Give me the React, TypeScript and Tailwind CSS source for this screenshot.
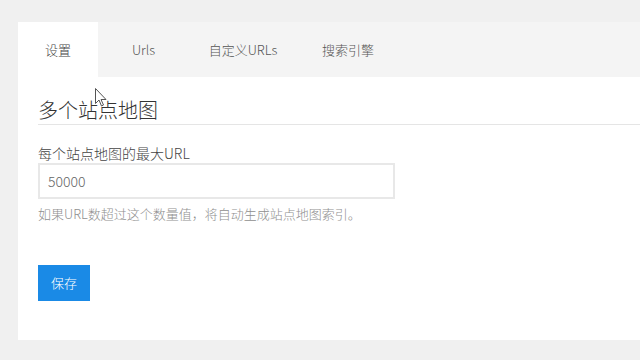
import React from "react";

const font = { fontFamily: '"Noto Sans CJK SC", "Noto Sans", sans-serif' };

export default function App() {
  const tabs = [
    { label: "设置", w: "w-[80px]", active: true },
    { label: "Urls", w: "w-[91px]" },
    { label: "自定义URLs", w: "w-[108px]" },
    { label: "搜索引擎", w: "w-[102px]" },
  ];
  return (
    <div className="w-[640px] h-[360px] bg-[#f0f0f0] pt-[22px] pl-[18px] overflow-hidden relative font-light" style={font}>
      <div className="bg-white w-[640px] h-[318px]">
        <div className="flex h-[55px] bg-[#f4f4f4]">
          {tabs.map((t) => (
            <div
              key={t.label}
              className={`${t.w} h-full flex items-center justify-center text-[13px] ${
                t.active ? "bg-white text-[#444]" : "text-[#555]"
              }`}
            >
              {t.label}
            </div>
          ))}
        </div>
        <div className="pl-[20px]">
          <div className="mt-[19px] h-[29px] leading-[28px] text-[20px] text-[#333] border-b border-[#e5e5e5]">
            多个站点地图
          </div>
          <div className="mt-[18px] text-[14px] leading-[20px] text-[#444]">每个站点地图的最大URL</div>
          <div className="w-[357px] h-[36px] border-2 border-[#e8e8e8] flex items-center pl-[8px] text-[14px] text-[#666]">
            50000
          </div>
          <div className="mt-[5px] text-[13px] leading-[20px] text-[#8f8f8f]">
            如果URL数超过这个数量值，将自动生成站点地图索引。
          </div>
          <button className="mt-[41px] w-[52px] h-[36px] bg-[#1a8ae6] text-white text-[13px] flex items-center justify-center">
            保存
          </button>
        </div>
      </div>
      <svg className="absolute left-[95px] top-[88px]" width="12" height="19" viewBox="0 0 12 19">
        <path d="M0.5 0.5 L0.5 15.5 L4 12 L6.5 18 L8.5 17 L6 11.5 L11 11.5 Z" fill="white" stroke="#555" strokeWidth="1" />
      </svg>
    </div>
  );
}
